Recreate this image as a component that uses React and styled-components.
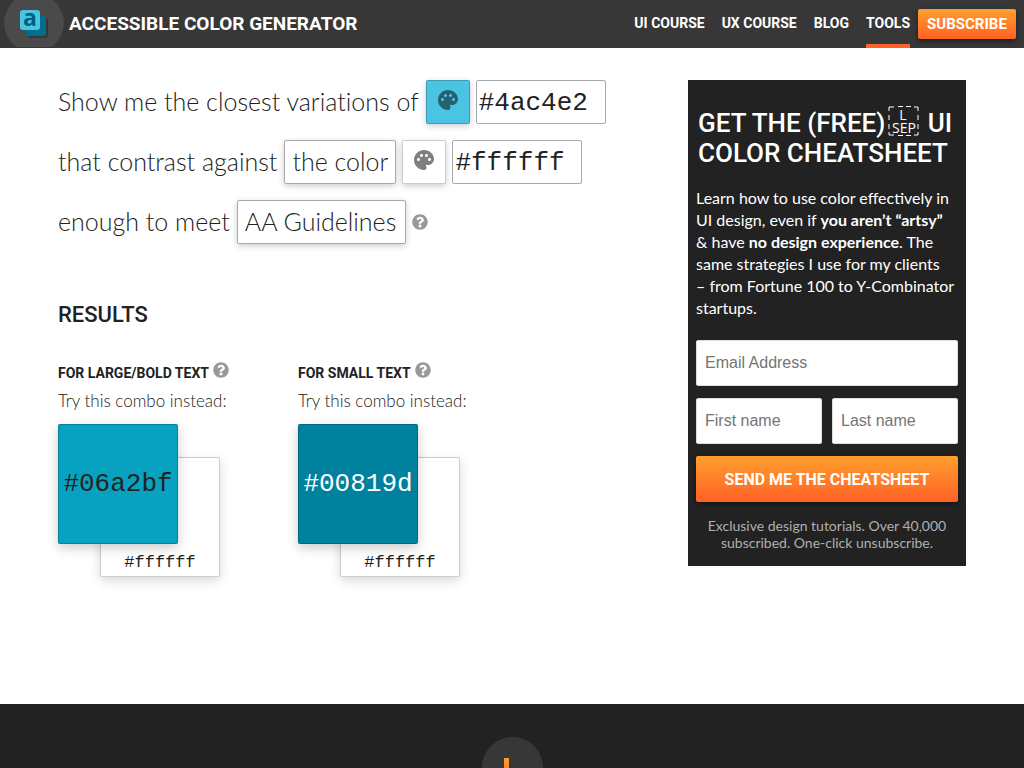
import React from "react";
import styled, { createGlobalStyle } from "styled-components";
import { MdPalette } from "react-icons/md";
import { FaQuestionCircle } from "react-icons/fa";

const body = 'Lato, "Liberation Sans", sans-serif';
const display = 'Roboto, "Liberation Sans", sans-serif';
const mono = '"Liberation Mono", monospace';
const orange = "linear-gradient(#ff9f2e, #ff6126)";

const GlobalStyle = createGlobalStyle`
  *, *::before, *::after { box-sizing: border-box; }
  html { scrollbar-width: none; }
  body { margin: 0; background: #fff; color: #222; font-family: ${body}; }
  h1, h2, h3, p { margin: 0; }
`;

const Header = styled.header`
  display: flex;
  align-items: center;
  justify-content: space-between;
  height: 48px;
  padding: 0 8px 0 4px;
  background: #373737;
  color: #fff;
`;

const Brand = styled.a`
  display: flex;
  align-items: center;
  gap: 5px;
  color: #fff;
  text-decoration: none;
`;

const Title = styled.h1`
  font: 700 19px/48px ${display};
  white-space: nowrap;
`;

const Nav = styled.nav`
  display: flex;
  align-items: center;
  gap: 17px;
`;

const NavLink = styled.a`
  height: 48px;
  border: 0 solid transparent;
  border-image: ${(p) => (p.$active ? `${orange} 1` : "none")};
  border-width: 0 0 4px;
  color: #fff;
  font: 700 14px/46px ${display};
  text-decoration: none;
  white-space: nowrap;
`;

const OrangeButton = styled.button`
  height: ${(p) => (p.$small ? "30px" : "46px")};
  width: ${(p) => (p.$small ? "98px" : "100%")};
  margin: ${(p) => (p.$small ? "0 0 0 -9px" : "0")};
  padding: 0;
  border: 0;
  border-radius: 2px;
  background: ${orange};
  box-shadow: 0 2px 5px rgba(0, 0, 0, 0.5);
  color: #fff;
  font: 700 ${(p) => (p.$small ? "15px" : "16px")} ${display};
  white-space: nowrap;
`;

const Content = styled.div`
  display: flex;
  align-items: flex-start;
  justify-content: space-between;
  min-height: 656px;
  padding: 32px 58px;
`;

const Main = styled.main`
  flex: 1;
`;

const Sentence = styled.form`
  display: flex;
  flex-direction: column;
  gap: 16px;
  font-variant-ligatures: none;
`;

const Line = styled.div`
  display: flex;
  align-items: center;
  gap: 6px;
  height: 44px;
`;

const Phrase = styled.label`
  height: 44px;
  padding-right: 1px;
  font-family: ${body};
  font-size: 25px;
  font-weight: 300;
  line-height: 42px;
  white-space: nowrap;
`;

const Choice = styled.select`
  appearance: none;
  height: 44px;
  padding: 0 7px 2px;
  border: 1px solid #aaa;
  border-radius: 2px;
  background: #fff;
  box-shadow: 0 2px 6px rgba(0, 0, 0, 0.2);
  color: #222;
  font: 300 25px ${body};
`;

const Picker = styled.button`
  display: flex;
  align-items: center;
  justify-content: center;
  width: 44px;
  height: 44px;
  padding: 0 0 4px;
  border: 1px solid rgba(0, 0, 0, 0.2);
  border-radius: 2px;
  background: ${(p) => p.$color};
  box-shadow: 0 2px 6px rgba(0, 0, 0, 0.2);
  color: rgba(0, 0, 0, 0.5);
`;

const HexInput = styled.input`
  width: 130px;
  height: 44px;
  padding: 2px 2px 0;
  border: 1px solid #aaa;
  border-radius: 2px;
  color: #222;
  font: 400 26px ${mono};
`;

const Help = styled.button`
  display: flex;
  padding: 0;
  border: 0;
  background: none;
  color: #999;
`;

const ResultsTitle = styled.h2`
  margin-top: 54px;
  font: 500 22px/34px ${display};
`;

const Results = styled.div`
  display: flex;
  margin-top: 28px;
`;

const Result = styled.section`
  width: 240px;
`;

const ResultHead = styled.div`
  display: flex;
  align-items: flex-start;
  gap: 4px;
  height: 24px;
  padding-top: 2px;
`;

const ResultTitle = styled.h3`
  font: 700 14px/22px ${display};
  white-space: nowrap;
`;

const Hint = styled.p`
  margin: 6px 0 12px;
  font: 300 17px/22px ${body};
`;

const Combo = styled.div`
  position: relative;
  width: 162px;
  height: 153px;
`;

const Back = styled.div`
  position: absolute;
  right: 0;
  bottom: 0;
  display: flex;
  align-items: flex-end;
  justify-content: center;
  width: 120px;
  height: 120px;
  padding-bottom: 3px;
  border: 1px solid #ccc;
  border-radius: 2px;
  background: #fff;
  box-shadow: 0 4px 12px rgba(0, 0, 0, 0.15);
  font: 400 17px/20px ${mono};
`;

const Front = styled.div`
  position: absolute;
  left: 0;
  top: 0;
  width: 120px;
  height: 120px;
  border: 1px solid rgba(0, 0, 0, 0.2);
  border-radius: 2px;
  background: ${(p) => p.$color};
  box-shadow: 0 4px 12px rgba(0, 0, 0, 0.2);
  color: ${(p) => p.$ink};
  font: 400 26px/118px ${mono};
  display: flex;
  justify-content: center;
`;

const Aside = styled.aside`
  width: 278px;
  padding: 28px 8px 14px;
  background: #222;
  color: #fff;
`;

const AsideTitle = styled.h2`
  padding-left: 2px;
  font: 500 26px/30px ${display};
  white-space: nowrap;
`;

const SeparatorBox = styled.svg`
  width: 31px;
  height: 30px;
  margin: 0 2px 0 3px;
  overflow: visible;
  vertical-align: bottom;
  fill: #fff;
  font: 400 14px "Open Sans", sans-serif;
`;

const Pitch = styled.p`
  margin: 19px 0 21px;
  font: 400 16px/22px ${body};
  white-space: nowrap;
`;

const SignUp = styled.form`
  display: flex;
  flex-direction: column;
  gap: 12px;
`;

const Names = styled.div`
  display: flex;
  gap: 10px;
`;

const Field = styled.input`
  flex: 1;
  width: 100%;
  min-width: 0;
  min-height: 46px;
  padding: 0 8px;
  border: 1px solid #ddd;
  border-radius: 2px;
  background: #fff;
  font: 400 16px "Liberation Sans", sans-serif;
  &::placeholder { color: #757575; opacity: 1; }
`;

const Note = styled.p`
  margin-top: 15px;
  padding-bottom: 1px;
  color: #b0b0b0;
  font: 400 14px/17px ${body};
  text-align: center;
`;

const Footer = styled.footer`
  display: flex;
  justify-content: center;
  padding: 33px 0;
  background: #222;
`;

function Logo() {
  return (
    <svg width="60" height="48" viewBox="0 0 60 48" aria-hidden="true">
      <path d="M11 0H49A30 30 0 0 1 48 47H12A30 30 0 0 1 11 0Z" fill="#4a4a4a" />
      <rect x="24" y="18" width="20" height="20" rx="3" fill="#373737" />
      <rect x="22" y="16" width="20" height="20" rx="3" fill="#006f8c" />
      <rect x="16" y="10" width="20" height="20" rx="3" fill="#4ac4e2" />
      <text x="26" y="26" textAnchor="middle" fontFamily="Open Sans" fontWeight="700" fontSize="23" fill="#005f7a">a</text>
    </svg>
  );
}

function Separator() {
  return (
    <SeparatorBox viewBox="0 4 31 30">
      <path d="M1 7V3H6M10 2.5H15M18 2.5H23M26 3H30V7M30 11V16M30 20V25M30 28V31H26M23 31.5H18M15 31.5H10M6 31H1V28M1 25V20M1 16V11" fill="none" stroke="#fff" />
      <text x="15" y="16" textAnchor="middle">L</text>
      <text x="16" y="29" textAnchor="middle">SEP</text>
    </SeparatorBox>
  );
}

function FooterMark() {
  return (
    <svg width="61" height="61" viewBox="0 0 61 61" aria-hidden="true">
      <defs>
        <linearGradient id="mark" x1="0" y1="0" x2="0" y2="1">
          <stop offset="0" stopColor="#ff9f2e" />
          <stop offset="1" stopColor="#ff6126" />
        </linearGradient>
      </defs>
      <circle cx="30.5" cy="30.5" r="30.5" fill="#373737" />
      <path d="M22 21H27V37H39V42H22Z" fill="url(#mark)" />
    </svg>
  );
}

function HelpButton() {
  return (
    <Help type="button" aria-label="Help">
      <FaQuestionCircle size={16} />
    </Help>
  );
}

function ComboResult({ title, color, ink }) {
  return (
    <Result>
      <ResultHead>
        <ResultTitle>{title}</ResultTitle>
        <HelpButton />
      </ResultHead>
      <Hint>Try this combo instead:</Hint>
      <Combo>
        <Back>#ffffff</Back>
        <Front $color={color} $ink={ink}>{color}</Front>
      </Combo>
    </Result>
  );
}

export default function App() {
  return (
    <>
      <GlobalStyle />
      <Header>
        <Brand href="#">
          <Logo />
          <Title>ACCESSIBLE COLOR GENERATOR</Title>
        </Brand>
        <Nav>
          <NavLink href="#">UI COURSE</NavLink>
          <NavLink href="#">UX COURSE</NavLink>
          <NavLink href="#">BLOG</NavLink>
          <NavLink href="#" $active>TOOLS</NavLink>
          <OrangeButton $small>SUBSCRIBE</OrangeButton>
        </Nav>
      </Header>
      <Content>
        <Main>
          <Sentence>
            <Line>
              <Phrase htmlFor="color">Show me the closest variations of</Phrase>
              <Picker type="button" aria-label="Pick color" $color="#4ac4e2"><MdPalette size={24} /></Picker>
              <HexInput id="color" defaultValue="#4ac4e2" />
            </Line>
            <Line>
              <Phrase htmlFor="against">that contrast against</Phrase>
              <Choice id="against"><option>the color</option></Choice>
              <Picker type="button" aria-label="Pick contrast color" $color="#fff"><MdPalette size={24} /></Picker>
              <HexInput aria-label="Contrast color" defaultValue="#ffffff" />
            </Line>
            <Line>
              <Phrase htmlFor="level">enough to meet</Phrase>
              <Choice id="level"><option>AA Guidelines</option></Choice>
              <HelpButton />
            </Line>
          </Sentence>
          <ResultsTitle>RESULTS</ResultsTitle>
          <Results>
            <ComboResult title="FOR LARGE/BOLD TEXT" color="#06a2bf" ink="#222" />
            <ComboResult title="FOR SMALL TEXT" color="#00819d" ink="#fff" />
          </Results>
        </Main>
        <Aside>
          <AsideTitle>
            GET THE (FREE)<Separator /> UI
            <br />
            COLOR CHEATSHEET
          </AsideTitle>
          <Pitch>
            Learn how to use color effectively in<br />
            UI design, even if <b>you aren’t “artsy”</b><br />
            &amp; have <b>no design experience</b>. The<br />
            same strategies I use for my clients<br />
            – from Fortune 100 to Y-Combinator<br />
            startups.
          </Pitch>
          <SignUp>
            <Field type="email" aria-label="Email Address" placeholder="Email Address" />
            <Names>
              <Field aria-label="First name" placeholder="First name" />
              <Field aria-label="Last name" placeholder="Last name" />
            </Names>
            <OrangeButton type="button">SEND ME THE CHEATSHEET</OrangeButton>
          </SignUp>
          <Note>Exclusive design tutorials. Over 40,000 subscribed. One-click unsubscribe.</Note>
        </Aside>
      </Content>
      <Footer>
        <FooterMark />
      </Footer>
    </>
  );
}
